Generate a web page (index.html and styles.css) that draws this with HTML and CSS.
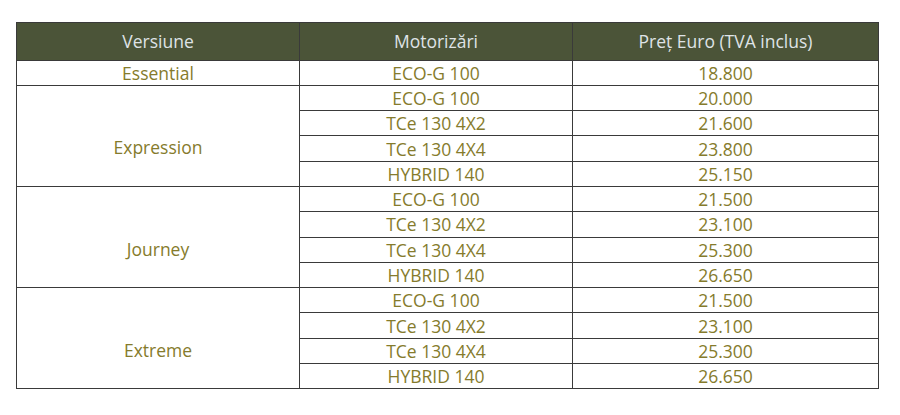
FILE: index.html
```html
<!DOCTYPE html>
<html lang="ro">
<head>
<meta charset="utf-8">
<link rel="stylesheet" href="styles.css">
</head>
<body>
<div class="wrap">
<table class="prices">
  <colgroup><col class="c1"><col class="c2"><col class="c3"></colgroup>
  <thead>
    <tr><th>Versiune</th><th>Motorizări</th><th>Preţ Euro (TVA inclus)</th></tr>
  </thead>
  <tbody>
    <tr><td>Essential</td><td>ECO-G 100</td><td>18.800</td></tr>
    <tr><td class="group" rowspan="4">Expression</td><td>ECO-G 100</td><td>20.000</td></tr>
    <tr><td>TCe 130 4X2</td><td>21.600</td></tr>
    <tr><td>TCe 130 4X4</td><td>23.800</td></tr>
    <tr><td>HYBRID 140</td><td>25.150</td></tr>
    <tr><td class="group" rowspan="4">Journey</td><td>ECO-G 100</td><td>21.500</td></tr>
    <tr><td>TCe 130 4X2</td><td>23.100</td></tr>
    <tr><td>TCe 130 4X4</td><td>25.300</td></tr>
    <tr><td>HYBRID 140</td><td>26.650</td></tr>
    <tr><td class="group" rowspan="4">Extreme</td><td>ECO-G 100</td><td>21.500</td></tr>
    <tr><td>TCe 130 4X2</td><td>23.100</td></tr>
    <tr><td>TCe 130 4X4</td><td>25.300</td></tr>
    <tr><td>HYBRID 140</td><td>26.650</td></tr>
  </tbody>
</table>
</div>
</body>
</html>
```
FILE: styles.css
```css
html, body { margin: 0; padding: 0; background: #fff; }
.wrap { padding: 22px 0 0 16px; }
.prices {
  border-collapse: collapse;
  table-layout: fixed;
  width: 862px;
  font-family: "Open Sans", "Noto Sans", sans-serif;
  font-size: 17.5px;
}
.c1 { width: 283px; }
.c2 { width: 273px; }
.c3 { width: 306px; }
.prices th, .prices td {
  border: 1.5px solid #3a3a3a;
  text-align: center;
  padding: 0;
  line-height: 20px;
}
.prices th {
  background: #4b5438;
  color: #dfe3e6;
  font-weight: 400;
  font-size: 17.5px;
  height: 36.5px;
}
.prices td {
  color: #857b2c;
  height: 24.3px;
}
.prices td.group {
  padding-top: 23px;
}
```
